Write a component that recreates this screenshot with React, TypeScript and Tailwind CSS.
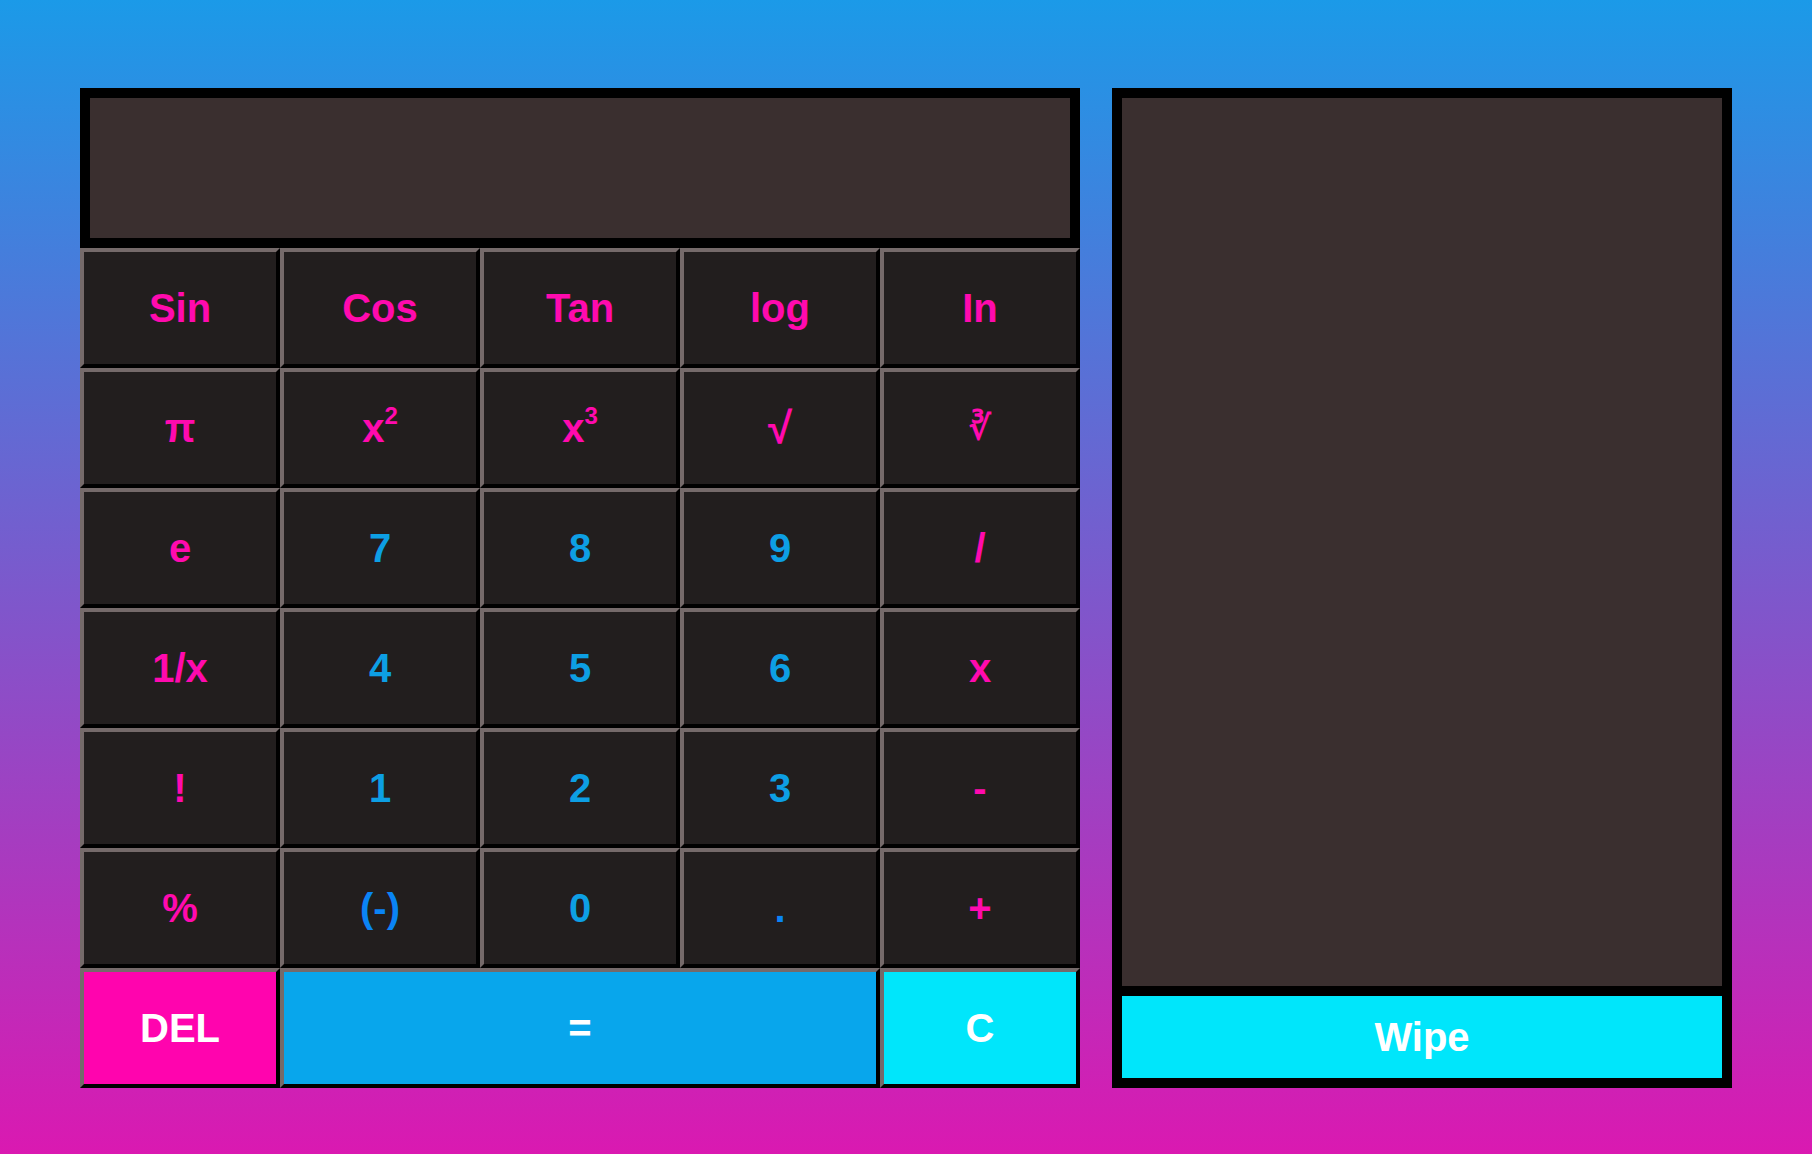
import React from 'react';

type Key = { label: React.ReactNode; id: string; kind: 'fn' | 'num' | 'alt' };

const KEYS: Key[] = [
    { id: 'sin', label: 'Sin', kind: 'fn' },
    { id: 'cos', label: 'Cos', kind: 'fn' },
    { id: 'tan', label: 'Tan', kind: 'fn' },
    { id: 'log', label: 'log', kind: 'fn' },
    { id: 'ln', label: 'In', kind: 'fn' },
    { id: 'pi', label: 'π', kind: 'fn' },
    { id: 'sq', label: <>x<sup className="text-[24px]">2</sup></>, kind: 'fn' },
    { id: 'cube', label: <>x<sup className="text-[24px]">3</sup></>, kind: 'fn' },
    { id: 'sqrt', label: <span className="text-[44px]">√</span>, kind: 'fn' },
    { id: 'cbrt', label: <span className="text-[34px]">∛</span>, kind: 'fn' },
    { id: 'e', label: 'e', kind: 'fn' },
    { id: '7', label: '7', kind: 'num' },
    { id: '8', label: '8', kind: 'num' },
    { id: '9', label: '9', kind: 'num' },
    { id: 'div', label: '/', kind: 'fn' },
    { id: 'inv', label: '1/x', kind: 'fn' },
    { id: '4', label: '4', kind: 'num' },
    { id: '5', label: '5', kind: 'num' },
    { id: '6', label: '6', kind: 'num' },
    { id: 'mul', label: 'x', kind: 'fn' },
    { id: 'fact', label: '!', kind: 'fn' },
    { id: '1', label: '1', kind: 'num' },
    { id: '2', label: '2', kind: 'num' },
    { id: '3', label: '3', kind: 'num' },
    { id: 'sub', label: '-', kind: 'fn' },
    { id: 'pct', label: '%', kind: 'fn' },
    { id: 'neg', label: '(-)', kind: 'alt' },
    { id: '0', label: '0', kind: 'num' },
    { id: 'dot', label: '.', kind: 'alt' },
    { id: 'add', label: '+', kind: 'fn' },
];

const keyBase =
    'h-[120px] flex items-center justify-center border-4 border-t-[#756a6a] border-l-[#756a6a] border-b-black border-r-black text-[40px] font-bold';

const colorFor: Record<Key['kind'], string> = {
    fn: 'text-[#ff0aae]',
    num: 'text-[#0d9fe4]',
    alt: 'text-[#0a84f5]',
};

export default function App() {
    return (
        <div
            className="min-h-[1154px] w-full bg-[linear-gradient(to_bottom,#1b9ae8,#da19b1)] flex justify-center items-start gap-8 pt-[88px]"
            style={{ fontFamily: '"Liberation Sans", Arial, sans-serif' }}
        >
            {/* Calculadora */}
            <div className="w-[1000px]">
                <div className="h-[160px] border-[10px] border-black bg-[#3a2f2f]" />
                <div className="grid grid-cols-5">
                    {KEYS.map((k) => (
                        <button key={k.id} className={`${keyBase} bg-[#221e1e] ${colorFor[k.kind]}`}>
                            {k.label}
                        </button>
                    ))}
                    <button className={`${keyBase} bg-[#ff04ae] text-white`}>DEL</button>
                    <button className={`${keyBase} col-span-3 bg-[#08a6ec] text-white`}>=</button>
                    <button className={`${keyBase} bg-[#00e6fb] text-white`}>C</button>
                </div>
            </div>

            {/* Historial */}
            <div className="w-[620px] h-[1000px] border-[10px] border-black bg-black flex flex-col gap-[10px]">
                <div className="flex-1 bg-[#3a2f2f]" />
                <button className="h-[82px] bg-[#00e6fb] text-white text-[40px] font-bold">Wipe</button>
            </div>
        </div>
    );
}
